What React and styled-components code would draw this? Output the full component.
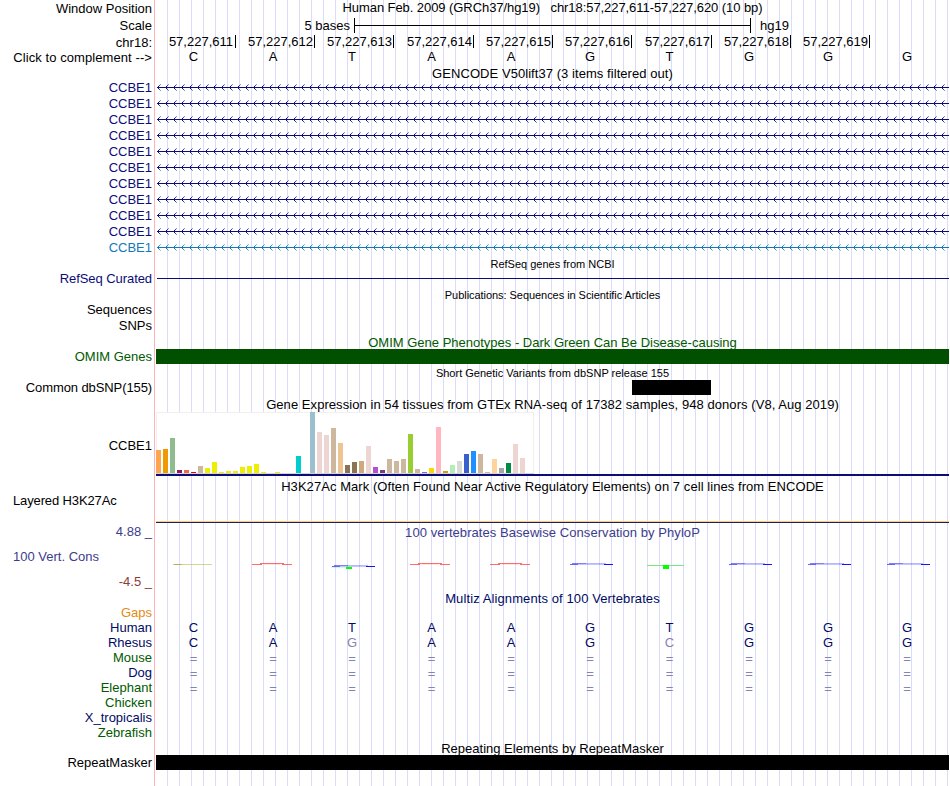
import React from 'react';
import styled, { createGlobalStyle } from 'styled-components';

const GlobalStyle = createGlobalStyle`
    body {
        margin: 0;
        background: #ffffff;
    }
`;

const Sheet = styled.div`
    width: 949px;
    height: 786px;
    display: flex;
    flex-direction: column;
    overflow: hidden;
    font-family: 'Liberation Sans', Arial, Helvetica, sans-serif;
    font-size: 13px;
    color: #000000;
    white-space: pre;
    background-image: linear-gradient(to right, #dcdcf8 1px, transparent 1px);
    background-size: 12px 100%;
    background-position: 11px 0;
`;

const Row = styled.div`
    display: grid;
    grid-template-columns: 156px 793px;
    grid-template-rows: 100%;
    height: ${(props) => props.$h}px;
    flex: none;
`;

const Label = styled.div`
    box-sizing: border-box;
    display: flex;
    align-items: center;
    justify-content: ${(props) => (props.$left ? 'flex-start' : 'flex-end')};
    padding: ${(props) => props.$drop || 0}px 4px ${(props) => props.$lift || 0}px 13px;
    line-height: 15px;
    letter-spacing: ${(props) => props.$ls || 0}px;
    color: ${(props) => props.$color || '#000000'};
    background: linear-gradient(to right, #ffffff 154px, #ffb4b4 154px 155px, #ffffff 155px);
`;

const Track = styled.div`
    display: flex;
    align-items: center;
    min-width: 0;
    padding-bottom: ${(props) => props.$lift || 0}px;
`;

const Title = styled.div`
    flex: 1;
    text-align: center;
    line-height: 15px;
    padding-top: ${(props) => props.$drop || 0}px;
    font-size: ${(props) => (props.$small ? 11 : 13)}px;
    letter-spacing: ${(props) => props.$ls || 0}px;
    color: ${(props) => props.$color || '#000000'};
`;

const Bar = styled.div`
    width: ${(props) => props.$w || 793}px;
    height: 100%;
    margin-left: ${(props) => props.$x || 0}px;
    background: ${(props) => props.$color || '#000000'};
`;

const ThinLine = styled.div`
    flex: 1;
    height: 1px;
    margin: 0 0 1px 1px;
    background: #0c0c78;
`;

const SignalLine = styled.div`
    flex: 1;
    align-self: flex-end;
    height: 1px;
    border-top: 1px solid #ffc880;
    background: #202050;
`;

const ScaleText = styled.span`
    width: ${(props) => props.$w}px;
    text-align: right;
    line-height: 15px;
`;

const ScaleBar = styled.div`
    box-sizing: border-box;
    width: 397px;
    height: 15px;
    margin: 0 9px 0 4px;
    border: solid #000000;
    border-width: 0 1px;
    background: linear-gradient(#000000, #000000) 0 7px / 100% 1px no-repeat;
`;

const BaseGrid = styled.div`
    display: grid;
    grid-template-columns: 80px 79px 79px 80px 79px 79px 80px 79px 79px 79px;
    line-height: 15px;
`;

const Position = styled.div`
    box-sizing: border-box;
    height: 13px;
    line-height: 13px;
    padding-right: 1px;
    text-align: right;
    border-right: 1px solid #000000;

    &:first-child {
        padding-right: 2px;
    }
`;

const Base = styled.div`
    box-sizing: border-box;
    height: 15px;
    padding: ${(props) => (props.$gap ? '1px 5px 0 0' : '0 5px 0 0')};
    text-align: center;
    color: ${(props) => props.$color};
`;

const Drawing = styled.svg`
    display: block;
    align-self: flex-start;
    shape-rendering: crispEdges;
`;

const NAVY = '#0c0c78';
const BLUE = '#1478b8';
const MULTIZ = '#000a64';
const GREEN = '#005a00';
const FADED = '#8484b4';

const SEQUENCE = 'CATAAGTGGG';

const GENES = Array.from({ length: 11 }, (_, i) => (i === 10 ? BLUE : NAVY));

const YELLOW = '#eeee00';
const TAN = '#cdb79e';
const ROSE = '#eed5d2';

// [height, color] for each tissue
const TISSUES = [
    [23, '#ffa54f'], [24, '#ee9a00'], [35, '#8fbc8f'], [3, '#8b1c62'], [3, '#ee6a50'], [1, '#ee0000'],
    [7, TAN], [5, YELLOW], [11, YELLOW], [1, YELLOW], [2, YELLOW], [2, YELLOW],
    [6, YELLOW], [7, YELLOW], [9, YELLOW], [1, YELLOW], [0, YELLOW], [1, YELLOW],
    [0, YELLOW], [0, YELLOW], [17, '#00cdcd'], [0, '#ee82ee'], [61, '#9ac0cd'], [41, ROSE],
    [38, ROSE], [45, TAN], [30, '#eec591'], [8, '#8b7355'], [11, '#8b7355'], [12, '#cdaa7d'],
    [27, ROSE], [6, '#b452cd'], [3, '#7a378b'], [14, TAN], [12, TAN], [14, TAN],
    [39, '#9acd32'], [4, TAN], [1, '#7a67ee'], [5, '#ffd700'], [46, '#ffb6c1'], [2, '#cd9b1d'],
    [8, '#b4eeb4'], [12, '#d9d9d9'], [19, '#3a5fcd'], [22, '#1e90ff'], [19, TAN], [1, TAN],
    [14, '#ffd39b'], [5, '#a6a6a6'], [10, '#008b45'], [29, ROSE], [15, ROSE], [0, '#ff00ff'],
];

const SPECIES = [
    { name: 'Gaps', color: '#e68a14', bases: '' },
    { name: 'Human', color: MULTIZ, bases: SEQUENCE },
    { name: 'Rhesus', color: MULTIZ, bases: 'CAGAAGCGGG' },
    { name: 'Mouse', color: GREEN, bases: '==========' },
    { name: 'Dog', color: MULTIZ, bases: '==========' },
    { name: 'Elephant', color: GREEN, bases: '==========' },
    { name: 'Chicken', color: GREEN, bases: '' },
    { name: 'X_tropicalis', color: MULTIZ, bases: '' },
    { name: 'Zebrafish', color: GREEN, bases: '' },
];

const TitleRow = ({ h, children, ...rest }) => (
    <Row $h={h}>
        <Label />
        <Track>
            <Title $drop={2} {...rest}>{children}</Title>
        </Track>
    </Row>
);

const GeneRow = ({ color, index }) => (
    <Row $h={16}>
        <Label $color={color}>CCBE1</Label>
        <Track>
            <Drawing width="793" height="16">
                <defs>
                    <pattern id={`arrow${index}`} width="8" height="16" patternUnits="userSpaceOnUse">
                        <g fill={color}>
                            <path d="M2 7h1v1h-1z M2 9h1v1h-1z" />
                            <path d="M3 6h1v1h-1z M3 10h1v1h-1z" opacity="0.8" />
                            <path d="M4 5h1v1h-1z M4 11h1v1h-1z" opacity="0.45" />
                        </g>
                    </pattern>
                </defs>
                <rect width="793" height="16" fill={`url(#arrow${index})`} />
                <rect x="1" y="8" width="792" height="1" fill={color} />
            </Drawing>
        </Track>
    </Row>
);

const Expression = () => (
    <Drawing width="793" height="64">
        <rect width="378" height="62" fill="#f0f0f0" />
        <rect x="1" y="1" width="376" height="60" fill="#ffffff" />
        <rect y="61" width="378" height="1" fill="#d4d4d4" />
        {TISSUES.map(([height, color], i) => (
            <rect key={i} x={i * 7} y={61 - height} width="5" height={height} fill={color} />
        ))}
        <rect y="62" width="793" height="2" fill={NAVY} />
    </Drawing>
);

const RedTrace = ({ x }) => (
    <g fill="#ff3c3c">
        <rect x={x} y="23" width="10" height="1" opacity="0.75" />
        <rect x={x + 8} y="22" width="24" height="1" opacity="0.75" />
        <rect x={x + 12} y="23" width="16" height="1" opacity="0.15" />
        <rect x={x + 30} y="23" width="10" height="1" opacity="0.75" />
    </g>
);

const BlueTrace = ({ x, y = 22 }) => (
    <g fill="#1414ff">
        <rect x={x} y={y + 1} width="8" height="1" opacity="0.65" />
        <rect x={x + 2} y={y} width="14" height="1" opacity="0.55" />
        <rect x={x + 8} y={y + 1} width="28" height="1" opacity="0.25" />
        <rect x={x + 16} y={y} width="20" height="1" opacity="0.3" />
        <rect x={x + 34} y={y + 1} width="9" height="1" />
    </g>
);

const Conservation = () => (
    <Drawing width="793" height="32">
        <rect x="17" y="23" width="39" height="1" fill="#b4b43c" opacity="0.55" />
        <rect x="18" y="23" width="8" height="1" fill="#a0a014" opacity="0.6" />
        {[96, 254, 334].map((x) => (
            <RedTrace key={x} x={x} />
        ))}
        <BlueTrace x={176} y={24} />
        <rect x="175" y="26" width="20" height="1" fill="#00ff00" opacity="0.2" />
        <rect x="190" y="26" width="6" height="2" fill="#00ff00" />
        <rect x="491" y="24" width="37" height="1" fill="#78e678" />
        <rect x="507" y="24" width="6" height="4" fill="#00ff00" />
        {[414, 573, 652, 731].map((x) => (
            <BlueTrace key={x} x={x} />
        ))}
    </Drawing>
);

const SpeciesRow = ({ name, color, bases }) => (
    <Row $h={15}>
        <Label $color={color}>{name}</Label>
        <Track>
            <BaseGrid>
                {bases.split('').map((base, i) => (
                    <Base key={i} $gap={base === '='} $color={base === SEQUENCE[i] ? MULTIZ : FADED}>
                        {base}
                    </Base>
                ))}
            </BaseGrid>
        </Track>
    </Row>
);

export default function App() {
    return (
        <>
            <GlobalStyle />
            <Sheet>
                <Row $h={17}>
                    <Label>Window Position</Label>
                    <Track $lift={2}>
                        <Title $ls={-0.07}>Human Feb. 2009 (GRCh37/hg19)   chr18:57,227,611-57,227,620 (10 bp)</Title>
                    </Track>
                </Row>
                <Row $h={16}>
                    <Label>Scale</Label>
                    <Track>
                        <ScaleText $w={194}>5 bases</ScaleText>
                        <ScaleBar />
                        <span>hg19</span>
                    </Track>
                </Row>
                <Row $h={17}>
                    <Label $drop={2}>chr18:</Label>
                    <Track>
                        <BaseGrid>
                            {SEQUENCE.slice(0, 9).split('').map((_, i) => (
                                <Position key={i}>{`57,227,${611 + i}`}</Position>
                            ))}
                        </BaseGrid>
                    </Track>
                </Row>
                <Row $h={15}>
                    <Label $ls={0.08}>{'Click to complement -->'}</Label>
                    <Track $lift={2}>
                        <BaseGrid>
                            {SEQUENCE.split('').map((base, i) => (
                                <Base key={i}>{base}</Base>
                            ))}
                        </BaseGrid>
                    </Track>
                </Row>

                <TitleRow h={14} $ls={0.06}>GENCODE V50lift37 (3 items filtered out)</TitleRow>
                {GENES.map((color, i) => (
                    <GeneRow key={i} index={i} color={color} />
                ))}

                <TitleRow h={16} $small>RefSeq genes from NCBI</TitleRow>
                <Row $h={16}>
                    <Label $lift={2} $ls={-0.07} $color={NAVY}>RefSeq Curated</Label>
                    <Track>
                        <ThinLine />
                    </Track>
                </Row>

                <TitleRow h={15} $small $ls={-0.05}>Publications: Sequences in Scientific Articles</TitleRow>
                <Row $h={15}>
                    <Label>Sequences</Label>
                </Row>
                <Row $h={16}>
                    <Label>SNPs</Label>
                </Row>

                <TitleRow h={16} $color={GREEN}>OMIM Gene Phenotypes - Dark Green Can Be Disease-causing</TitleRow>
                <Row $h={15}>
                    <Label $color={GREEN}>OMIM Genes</Label>
                    <Bar $color="#005000" />
                </Row>

                <TitleRow h={16} $small>Short Genetic Variants from dbSNP release 155</TitleRow>
                <Row $h={15}>
                    <Label $ls={-0.1}>Common dbSNP(155)</Label>
                    <Bar $x={476} $w={79} />
                </Row>

                <TitleRow h={17} $ls={0.06}>Gene Expression in 54 tissues from GTEx RNA-seq of 17382 samples, 948 donors (V8, Aug 2019)</TitleRow>
                <Row $h={64}>
                    <Label $drop={2}>CCBE1</Label>
                    <Track>
                        <Expression />
                    </Track>
                </Row>

                <TitleRow h={18} $ls={0.06}>H3K27Ac Mark (Often Found Near Active Regulatory Elements) on 7 cell lines from ENCODE</TitleRow>
                <Row $h={29}>
                    <Label $left $lift={16} $ls={-0.13}>Layered H3K27Ac</Label>
                    <Track>
                        <SignalLine />
                    </Track>
                </Row>

                <Row $h={18}>
                    <Label $color="#3c3c8c" $lift={1}>4.88 _</Label>
                    <Track>
                        <Title $color="#3c3c8c" $ls={0.06}>100 vertebrates Basewise Conservation by PhyloP</Title>
                    </Track>
                </Row>
                <Row $h={32}>
                    <Label $left $lift={2} $color="#3c3c8c">100 Vert. Cons</Label>
                    <Track>
                        <Conservation />
                    </Track>
                </Row>
                <Row $h={17}>
                    <Label $color="#8c3c3c">-4.5 _</Label>
                </Row>

                <TitleRow h={15} $color={MULTIZ} $ls={0.1}>Multiz Alignments of 100 Vertebrates</TitleRow>
                {SPECIES.map((species) => (
                    <SpeciesRow key={species.name} {...species} />
                ))}

                <TitleRow h={15}>Repeating Elements by RepeatMasker</TitleRow>
                <Row $h={15}>
                    <Label>RepeatMasker</Label>
                    <Bar />
                </Row>
                <Row $h={16}>
                    <Label />
                </Row>
            </Sheet>
        </>
    );
}
